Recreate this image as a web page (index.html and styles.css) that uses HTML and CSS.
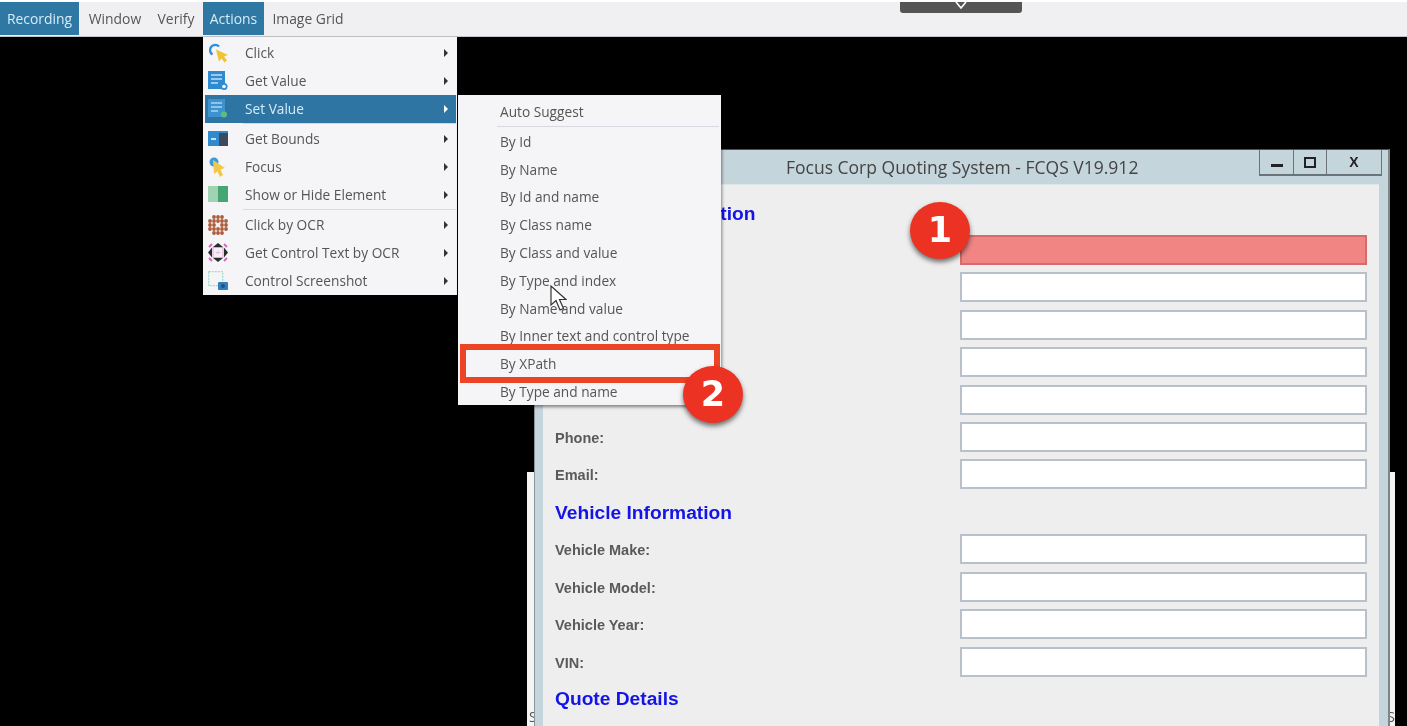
FILE: index.html
```html
<!DOCTYPE html>
<html lang="en">
<head>
    <meta charset="UTF-8">
    <meta name="viewport" content="width=device-width, initial-scale=1.0">
    <title>Focus Corp Quoting System</title>
    <link rel="stylesheet" href="styles.css">
</head>
<body>
<div class="screen">
    <nav class="menubar">
        <span class="tab tab-active tab-recording">Recording</span>
        <span class="tab tab-window">Window</span>
        <span class="tab tab-verify">Verify</span>
        <span class="tab tab-active tab-actions">Actions</span>
        <span class="tab tab-grid">Image Grid</span>
    </nav>
    <div class="pull-tab">
        <svg width="14" height="8" viewBox="0 0 14 8"><path d="M2 0 7 6 12 0" fill="none" stroke="#fff" stroke-width="1.6"/></svg>
    </div>

    <!-- page behind the app window -->
    <div class="back-page"><span>S</span><span>S</span></div>

    <section class="window">
        <header class="titlebar">
            <span class="title">Focus Corp Quoting System - FCQS V19.912</span>
            <div class="win-buttons">
                <span class="win-btn win-min"><i></i></span>
                <span class="win-btn win-max"><i></i></span>
                <span class="win-btn win-close">X</span>
            </div>
        </header>
        <div class="content">
            <h2>Customer Information</h2>
            <div class="rows">
                <label></label><input class="field field-hit" type="text">
                <label></label><input class="field" type="text">
                <label></label><input class="field" type="text">
                <label></label><input class="field" type="text">
                <label></label><input class="field" type="text">
                <label>Phone:</label><input class="field" type="text">
                <label>Email:</label><input class="field" type="text">
            </div>
            <h2>Vehicle Information</h2>
            <div class="rows">
                <label>Vehicle Make:</label><input class="field" type="text">
                <label>Vehicle Model:</label><input class="field" type="text">
                <label>Vehicle Year:</label><input class="field" type="text">
                <label>VIN:</label><input class="field" type="text">
            </div>
            <h2 class="quote-head">Quote Details</h2>
        </div>
    </section>

    <ul class="menu menu-actions">
        <li class="item">
            <svg class="icon" viewBox="0 0 20 20"><path d="M11 3.500A5.200 5.200 0 1 0 4.500 11.500" fill="none" stroke="#2f8fd8" stroke-width="2.400"/><path d="M8 6.500 20 12l-4 1.500 3 4-2.500 2-3-4-2.500 3z" fill="#f2c230"/></svg>
            Click<b class="arrow"></b>
        </li>
        <li class="item">
            <svg class="icon" viewBox="0 0 20 20"><rect width="17" height="18" fill="#2f8bd0"/><path d="M3 4h11M3 8h11M3 12h7" stroke="#bfe0f5" stroke-width="1.300"/><circle cx="16" cy="15.500" r="3.500" fill="#2f8bd0"/><circle cx="16" cy="15.500" r="1.800" fill="#fff"/></svg>
            Get Value<b class="arrow"></b>
        </li>
        <li class="item item-on">
            <svg class="icon" viewBox="0 0 20 20"><rect width="17" height="18" fill="#3d93cf"/><path d="M3 4h11M3 8h11M3 12h7" stroke="#a9d5ef" stroke-width="1.300"/><circle cx="16" cy="15.500" r="3" fill="#5fbf7a"/></svg>
            Set Value<b class="arrow"></b>
        </li>
        <li class="rule rule-blue"></li>
        <li class="item">
            <svg class="icon" viewBox="0 0 20 20"><rect y="2" width="20" height="15" fill="#2f8bd0"/><rect x="11" y="4" width="9" height="13" fill="#3c4a5c"/><path d="M3 10h5" stroke="#fff" stroke-width="1.500"/></svg>
            Get Bounds<b class="arrow"></b>
        </li>
        <li class="item">
            <svg class="icon" viewBox="0 0 20 20"><circle cx="6" cy="5" r="4.500" fill="#3f9bd8"/><path d="M5 3 17 11l-4.500 1.500L15 18l-3 2-2.500-5.500L6 17z" fill="#f2c84a"/></svg>
            Focus<b class="arrow"></b>
        </li>
        <li class="item">
            <svg class="icon" viewBox="0 0 20 20"><rect y="1" width="10" height="16" fill="#9fd3b4"/><rect x="10" y="1" width="10" height="16" fill="#46a672"/></svg>
            Show or Hide Element<b class="arrow"></b>
        </li>
        <li class="rule"></li>
        <li class="item">
            <svg class="icon" viewBox="0 0 20 20"><path d="M6 2h8.100M2 6h16.100M2 10h4.100M14 10h4.100M2 14h16.100M6 18h8.100" fill="none" stroke="#ad5c3c" stroke-width="3.800" stroke-linecap="round" stroke-dasharray="0 4"/><rect x="8" y="8" width="4" height="4" fill="#fbeee6"/></svg>
            Click by OCR<b class="arrow"></b>
        </li>
        <li class="item">
            <svg class="icon" viewBox="0 0 20 20"><rect x="5" y="4.500" width="10" height="10" fill="#f8eef7" stroke="#d9a6d3"/><path d="M10 7.500v4M7.500 9.500h5" stroke="#e3bfe0"/><path d="M5 4 10 0l5 4zM5 15l5 4 5-4zM4 4.500 0 9.500l4 5zM16 4.500l4 5-4 5z" fill="#2c2c2c"/><path d="M1 4 4 1M16 1l3 3M1 15l3 3M19 15l-3 3" stroke="#e05cc8" stroke-width="1.800"/></svg>
            Get Control Text by OCR<b class="arrow"></b>
        </li>
        <li class="item">
            <svg class="icon" viewBox="0 0 20 20"><rect x=".7" y=".7" width="14" height="14" fill="none" stroke="#a5dac6" stroke-width="1.300" stroke-dasharray="2 1"/><rect x="10" y="11" width="10" height="8" rx="1" fill="#2f7fc0"/><circle cx="15" cy="15" r="2" fill="#24527f"/></svg>
            Control Screenshot<b class="arrow"></b>
        </li>
    </ul>

    <ul class="menu menu-sub">
        <li class="sub">Auto Suggest</li>
        <li class="rule rule-sub"></li>
        <li class="sub">By Id</li>
        <li class="sub">By Name</li>
        <li class="sub">By Id and name</li>
        <li class="sub">By Class name</li>
        <li class="sub">By Class and value</li>
        <li class="sub">By Type and index</li>
        <li class="sub">By Name and value</li>
        <li class="sub">By Inner text and control type</li>
        <li class="sub">By XPath</li>
        <li class="sub">By Type and name</li>
    </ul>

    <svg class="cursor" width="17" height="27" viewBox="0 0 17 27"><path d="M1 1v19l5-4.500 4 9.500 3.500-1.500-4-9H16z" fill="#fff" stroke="#333" stroke-width="1.200"/></svg>
    <div class="callout-box"></div>
    <div class="badge badge-one">1</div>
    <div class="badge badge-two">2</div>
</div>
</body>
</html>
```

FILE: styles.css
```css
html, body {
    margin: 0;
    padding: 0;
    height: 100%;
    overflow: hidden;
    background-color: #000;
}

.screen {
    position: relative;
    width: 1407px;
    height: 726px;
    overflow: hidden;
    background-color: #000;
    font-family: "Open Sans", "Noto Sans", sans-serif;
    filter: blur(0.5px);
}

/* top menu bar */
.menubar {
    display: flex;
    height: 34px;
    border-top: 2px solid #fff;
    background-color: #f0f0f2;
    border-bottom: 1px solid #c4c4c8;
    font-size: 13.9px;
    color: #555;
}
.tab {
    display: flex;
    align-items: center;
    justify-content: center;
    height: 33px;
}
.tab-active {
    background-color: #2f78a3;
    color: #d6ecf7;
}
.tab-recording { width: 79px; }
.tab-window { width: 72px; }
.tab-verify {
    width: 50px;
    padding-right: 2px;
}
.tab-actions { width: 61px; }
.tab-grid { width: 88px; }

.pull-tab {
    position: absolute;
    left: 900px;
    top: 2px;
    width: 122px;
    height: 11px;
    background-color: #555;
    border-radius: 0 0 3px 3px;
    text-align: center;
    line-height: 0;
}

.back-page {
    position: absolute;
    left: 527px;
    top: 472px;
    width: 868px;
    height: 254px;
    background-color: #f4f4f4;
    display: flex;
    justify-content: space-between;
    align-items: flex-end;
    font-size: 14px;
    color: #555;
    padding: 0 0 0 2px;
    box-sizing: border-box;
}

/* app window */
.window {
    position: absolute;
    left: 534px;
    top: 149px;
    width: 856px;
    height: 577px;
    box-sizing: border-box;
    background-color: #c5d5dc;
    border-top: 1px solid #4a5358;
    border-left: 1px solid #8b9498;
    border-right: 2px solid #7d8589;
    display: flex;
    flex-direction: column;
}
.titlebar {
    display: flex;
    height: 34px;
    padding-left: 251px;
    font-size: 17.5px;
    color: #444;
}
.title {
    line-height: 35px;
}
.win-buttons {
    display: flex;
    margin-left: auto;
    margin-right: 6px;
    height: 24px;
    border: 1px solid #6b7479;
    border-top: none;
    border-bottom-width: 2px;
}
.win-btn {
    display: flex;
    align-items: center;
    justify-content: center;
    border-right: 1px solid #6b7479;
    color: #222;
}
.win-min { width: 33px; }
.win-max { width: 32px; }
.win-close {
    width: 54px;
    border-right: none;
    font: bold 14px "Liberation Sans", sans-serif;
}
.win-min i {
    width: 12px;
    height: 3px;
    margin-top: 7px;
    background-color: #222;
}
.win-max i {
    width: 8px;
    height: 7px;
    border: 2px solid #222;
}

.content {
    flex: 1;
    margin: 0 9px 0 8px;
    padding: 17px 13px 0 12px;
    background-color: #eee;
    border-top: 1px solid #dfe6ea;
    font-family: "Liberation Sans", Arial, sans-serif;
}
.content h2 {
    margin: 12px 0 9px;
    font-size: 19.2px;
    line-height: 24px;
    font-weight: bold;
    color: #1414e6;
}
.content h2:first-child {
    margin: 0 0 9px;
}
.content .quote-head {
    margin-top: 10px;
}
.rows {
    display: grid;
    grid-template-columns: 405px 407px;
    grid-auto-rows: 30px;
    row-gap: 7.4px;
}
.rows label {
    font-size: 14.5px;
    font-weight: bold;
    line-height: 32px;
    color: #5a5a5a;
}
.field {
    box-sizing: border-box;
    height: 30px;
    width: 100%;
    margin: 0;
    padding: 0;
    background-color: #fff;
    border: 2px solid #b8c0cb;
    outline: none;
}
.field-hit {
    background-color: #f08583;
    border-color: #d46c6c;
}

/* menus */
.menu {
    position: absolute;
    margin: 0;
    list-style: none;
    box-sizing: border-box;
    background-color: #f5f5f8;
    font-size: 13.7px;
    color: #555;
    box-shadow: 1px 2px 3px rgba(0, 0, 0, 0.45);
}
.menu-actions {
    left: 203px;
    top: 37px;
    width: 254px;
    height: 258px;
    padding: 2px 1px 0 2px;
}
.menu-sub {
    left: 458px;
    top: 95px;
    width: 263px;
    height: 310px;
    padding: 3px 2px 0 0;
}
.item {
    position: relative;
    display: flex;
    align-items: center;
    box-sizing: border-box;
    height: 28px;
    padding: 0 0 2px 40px;
}
.item-on {
    background-color: #2f75a3;
    color: #d6ecf7;
}
.icon {
    position: absolute;
    left: 3px;
    top: 4px;
    width: 20px;
    height: 20px;
}
.arrow {
    position: absolute;
    right: 8px;
    top: 10px;
    border-left: 4px solid #333;
    border-top: 4px solid transparent;
    border-bottom: 4px solid transparent;
}
.item-on .arrow {
    border-left-color: #fff;
}
.rule {
    height: 1px;
    margin: 0 0 1px 38px;
    background-color: #d9d9e2;
}
.rule-blue {
    background-color: #c6dbe8;
}
.rule-sub {
    margin-left: 39px;
}
.sub {
    height: 27.8px;
    line-height: 27.8px;
    padding-left: 42px;
}

.cursor {
    position: absolute;
    left: 550px;
    top: 285px;
}
.callout-box {
    position: absolute;
    left: 460px;
    top: 344px;
    width: 260px;
    height: 39px;
    box-sizing: border-box;
    border: 6px solid #ec4526;
}
.badge {
    position: absolute;
    width: 60px;
    height: 57px;
    border-radius: 50%;
    background-color: #ec3323;
    color: #fff;
    font: bold 35px/57px "DejaVu Sans", sans-serif;
    text-align: center;
    box-shadow: 0 3px 5px rgba(0, 0, 0, 0.55);
}
.badge-one {
    left: 910px;
    top: 202px;
}
.badge-two {
    left: 683px;
    top: 366px;
}
```
